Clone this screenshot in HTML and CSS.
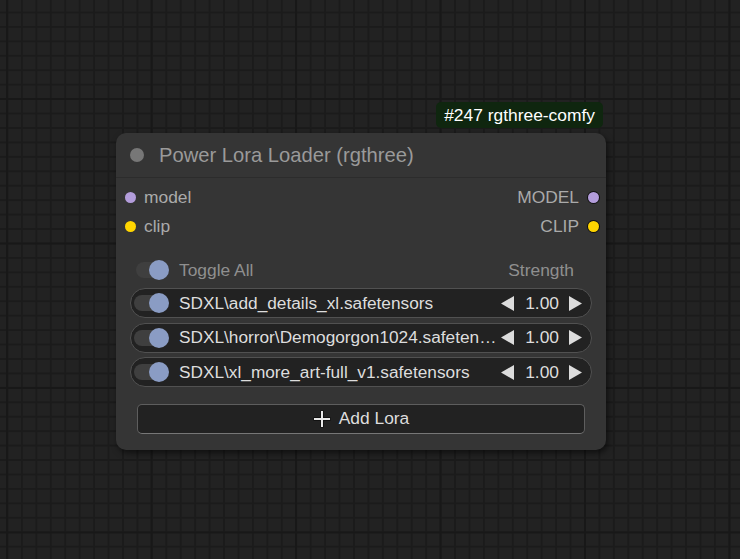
FILE: index.html
```html
<!DOCTYPE html>
<html>
<head>
<meta charset="utf-8">
<link rel="stylesheet" href="styles.css">
</head>
<body>
<div class="canvas">
  <div class="node">
    <div class="badge">#247 rgthree-comfy</div>
    <div class="title"><span class="title-dot"></span><span class="title-text">Power Lora Loader (rgthree)</span></div>
    <div class="node-body">
      <div class="slots">
        <div class="slot in"><span class="sdot model"></span><span>model</span></div>
        <div class="slot out"><span>MODEL</span><span class="sdot model ring"></span></div>
        <div class="slot in"><span class="sdot clip"></span><span>clip</span></div>
        <div class="slot out"><span>CLIP</span><span class="sdot clip ring"></span></div>
      </div>
      <div class="toggle-all">
        <div class="toggle"><span class="knob"></span></div>
        <span class="ta-label">Toggle All</span>
        <span class="strength-label">Strength</span>
      </div>
      <div class="loras">
        <div class="lora">
          <div class="toggle"><span class="knob"></span></div>
          <span class="lora-name">SDXL\add_details_xl.safetensors</span>
          <div class="strength">
            <svg class="arr" width="13" height="15" viewBox="0 0 13 15"><polygon points="13,0 13,15 0,7.5" fill="#dcdcdc"/></svg>
            <span class="val">1.00</span>
            <svg class="arr" width="13" height="15" viewBox="0 0 13 15"><polygon points="0,0 0,15 13,7.5" fill="#dcdcdc"/></svg>
          </div>
        </div>
        <div class="lora">
          <div class="toggle"><span class="knob"></span></div>
          <span class="lora-name">SDXL\horror\Demogorgon1024.safeten…</span>
          <div class="strength">
            <svg class="arr" width="13" height="15" viewBox="0 0 13 15"><polygon points="13,0 13,15 0,7.5" fill="#dcdcdc"/></svg>
            <span class="val">1.00</span>
            <svg class="arr" width="13" height="15" viewBox="0 0 13 15"><polygon points="0,0 0,15 13,7.5" fill="#dcdcdc"/></svg>
          </div>
        </div>
        <div class="lora">
          <div class="toggle"><span class="knob"></span></div>
          <span class="lora-name">SDXL\xl_more_art-full_v1.safetensors</span>
          <div class="strength">
            <svg class="arr" width="13" height="15" viewBox="0 0 13 15"><polygon points="13,0 13,15 0,7.5" fill="#dcdcdc"/></svg>
            <span class="val">1.00</span>
            <svg class="arr" width="13" height="15" viewBox="0 0 13 15"><polygon points="0,0 0,15 13,7.5" fill="#dcdcdc"/></svg>
          </div>
        </div>
      </div>
      <div class="add-btn">
        <svg class="plus" width="18" height="18" viewBox="0 0 18 18"><path d="M9 0.5V17.5M0.5 9H17.5" stroke="#111" stroke-width="4"/><path d="M9 1V17M1 9H17" stroke="#e8e8e8" stroke-width="2"/></svg>
        <span>Add Lora</span>
      </div>
    </div>
  </div>
</div>
</body>
</html>
```
FILE: styles.css
```css
html, body {
  margin: 0;
  padding: 0;
}
body {
  width: 740px;
  height: 559px;
  overflow: hidden;
  font-family: "Liberation Sans", Arial, sans-serif;
  background-color: #222222;
  background-image:
    linear-gradient(to right, #181818 2px, transparent 2px),
    linear-gradient(to bottom, #181818 2px, transparent 2px),
    linear-gradient(to right, #1b1b1b 1.5px, transparent 1.5px),
    linear-gradient(to bottom, #1b1b1b 1.5px, transparent 1.5px);
  background-size: 144.5px 144.5px, 144.5px 144.5px, 14.45px 14.45px, 14.45px 14.45px;
  background-position: 6px 98px, 6px 98px, 6.5px 11.5px, 6.5px 11.5px;
}
.canvas {
  position: relative;
  width: 740px;
  height: 559px;
}
.node {
  position: absolute;
  left: 116px;
  top: 133px;
  width: 490px;
  height: 317px;
  background: #353535;
  border-radius: 10px;
  box-shadow: 2px 3px 6px rgba(0, 0, 0, 0.55);
  display: flex;
  flex-direction: column;
}
.badge {
  position: absolute;
  right: 3px;
  top: -31px;
  height: 26px;
  line-height: 26px;
  padding: 0 8px;
  background: #0f260f;
  border-radius: 5px;
  color: #ffffff;
  font-size: 17.4px;
}
.title {
  height: 44px;
  border-bottom: 1px solid #2c2c2c;
  display: flex;
  align-items: center;
  padding-left: 14px;
}
.title-dot {
  width: 14px;
  height: 14px;
  border-radius: 50%;
  background: #777777;
  margin-right: 15px;
}
.title-text {
  color: #9a9a9a;
  font-size: 20.2px;
}
.node-body {
  display: flex;
  flex-direction: column;
  padding-top: 5px;
}
.slots {
  display: grid;
  grid-template-columns: 1fr 1fr;
  grid-auto-rows: 29px;
}
.slot {
  display: flex;
  align-items: center;
  color: #aaaaaa;
  font-size: 17.4px;
}
.slot.in {
  padding-left: 9px;
}
.slot.out {
  justify-content: flex-end;
  padding-right: 7px;
}
.sdot {
  width: 11px;
  height: 11px;
  border-radius: 50%;
  flex: none;
}
.slot.in .sdot {
  margin-right: 8px;
}
.slot.out .sdot {
  margin-left: 9px;
}
.sdot.model { background: #b39ddb; }
.sdot.clip { background: #ffd500; }
.sdot.ring {
  box-shadow: 0 0 0 1px #111;
}
.toggle-all {
  display: flex;
  align-items: center;
  height: 24px;
  margin-top: 17px;
  padding-left: 20px;
  padding-right: 32px;
  font-size: 17.4px;
  color: #8f8f8f;
}
.toggle {
  width: 33px;
  height: 16px;
  border-radius: 8px;
  background: #3f3f3f;
  display: flex;
  align-items: center;
  justify-content: flex-end;
  flex: none;
}
.knob {
  width: 20px;
  height: 20px;
  border-radius: 50%;
  background: #8a9cc4;
  margin-right: -2px;
  flex: none;
}
.toggle-all .toggle {
  width: 31px;
}
.ta-label {
  margin-left: 12px;
  flex: 1;
}
.loras {
  display: flex;
  flex-direction: column;
  gap: 4.5px;
  margin: 6px 14px 0;
}
.lora {
  height: 30px;
  box-sizing: border-box;
  border: 1px solid #515151;
  border-radius: 15px;
  background: #222222;
  display: flex;
  align-items: center;
  padding: 0 9px 0 3px;
}
.lora-name {
  flex: 1;
  min-width: 0;
  margin-left: 12px;
  margin-right: 4px;
  color: #dddddd;
  font-size: 17.25px;
  white-space: nowrap;
}
.strength {
  display: flex;
  align-items: center;
  flex: none;
  color: #dddddd;
  font-size: 17.4px;
}
.val {
  margin: 0 10px 0 11px;
}
.arr {
  display: block;
}
.add-btn {
  margin: 16.5px 21px 0;
  height: 30px;
  box-sizing: border-box;
  border: 1px solid #5e5e5e;
  border-bottom-color: #777;
  border-radius: 5px;
  background: #222222;
  display: flex;
  align-items: center;
  justify-content: center;
  gap: 8px;
  color: #dddddd;
  font-size: 17.4px;
}
.plus {
  display: block;
}
```
